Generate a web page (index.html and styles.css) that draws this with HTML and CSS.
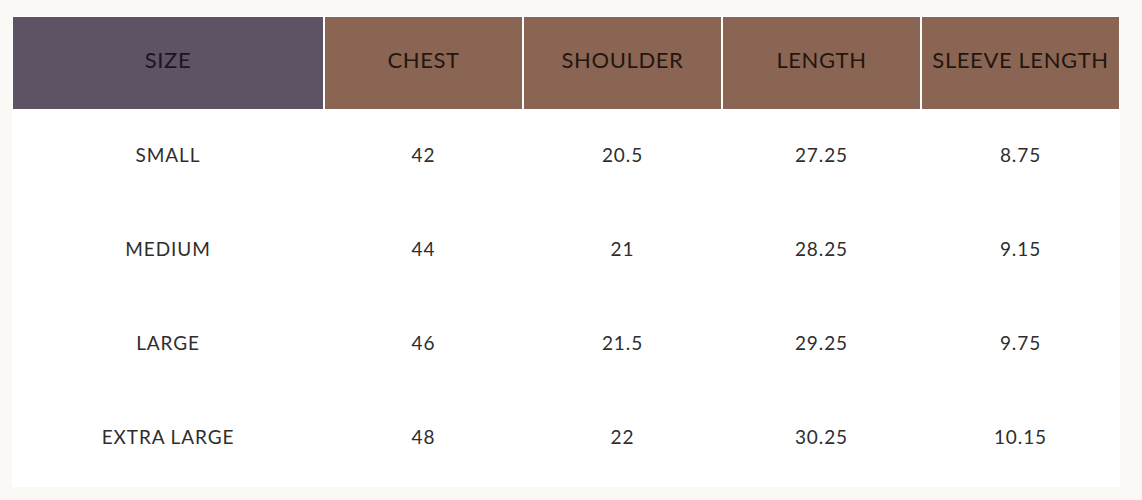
FILE: index.html
```html
<!DOCTYPE html>
<html>
<head>
<meta charset="utf-8">
<link rel="stylesheet" href="styles.css">
</head>
<body>
<div class="panel">
  <div class="chart">
    <div class="th th-size">SIZE</div>
    <div class="th">CHEST</div>
    <div class="th">SHOULDER</div>
    <div class="th">LENGTH</div>
    <div class="th">SLEEVE LENGTH</div>

    <div class="td">SMALL</div>
    <div class="td">42</div>
    <div class="td">20.5</div>
    <div class="td">27.25</div>
    <div class="td">8.75</div>

    <div class="td">MEDIUM</div>
    <div class="td">44</div>
    <div class="td">21</div>
    <div class="td">28.25</div>
    <div class="td">9.15</div>

    <div class="td">LARGE</div>
    <div class="td">46</div>
    <div class="td">21.5</div>
    <div class="td">29.25</div>
    <div class="td">9.75</div>

    <div class="td">EXTRA LARGE</div>
    <div class="td">48</div>
    <div class="td">22</div>
    <div class="td">30.25</div>
    <div class="td">10.15</div>
  </div>
</div>
</body>
</html>
```

FILE: styles.css
```css
html, body {
  margin: 0;
  padding: 0;
  background: #faf9f6;
}
body {
  padding: 16px 22px 13px 12px;
  font-family: Lato, "Noto Sans", sans-serif;
}
.panel {
  background: #ffffff;
  padding: 1px 2px 2px 1px;
}
.chart {
  display: grid;
  grid-template-columns: 310px repeat(4, 197px);
  grid-template-rows: 92px repeat(4, 94px);
  column-gap: 2px;
  background: #ffffff;
}
.th {
  display: flex;
  align-items: center;
  justify-content: center;
  padding-bottom: 8px;
  background: #8b6554;
  color: #22160f;
  font-size: 22px;
  white-space: nowrap;
  letter-spacing: 0.6px;
}
.th-size {
  background: #5e5265;
  color: #1c1420;
}
.td {
  display: flex;
  align-items: center;
  justify-content: center;
  padding-bottom: 3px;
  color: #2e2e2e;
  font-size: 19px;
  white-space: nowrap;
  letter-spacing: 0.9px;
}
```
